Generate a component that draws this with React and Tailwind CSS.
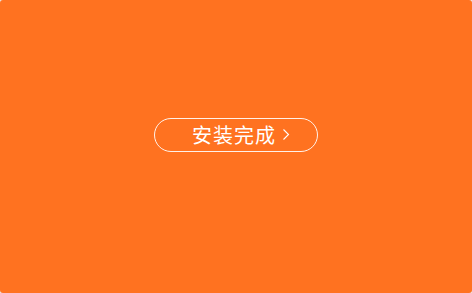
export default function App() {
  return (
    <div className="w-[472px] h-[293px] bg-[#e9e9e9]">
      <div className="w-full h-full rounded-[3px] bg-[#ff7220] flex items-center justify-center">
        <button className="mt-[-24px] h-[34px] w-[164px] rounded-full border border-white/90 flex items-center pl-[37px] text-white font-['Noto_Sans_CJK_SC',sans-serif]">
          <span className="text-[20px] leading-none tracking-[1px]">安装完成</span>
          <svg className="ml-[6px]" width="8" height="13" viewBox="0 0 8 13" fill="none">
            <path d="M1.5 1.5 L6.5 6.5 L1.5 11.5" stroke="white" strokeWidth="1.1" />
          </svg>
        </button>
      </div>
    </div>
  );
}
